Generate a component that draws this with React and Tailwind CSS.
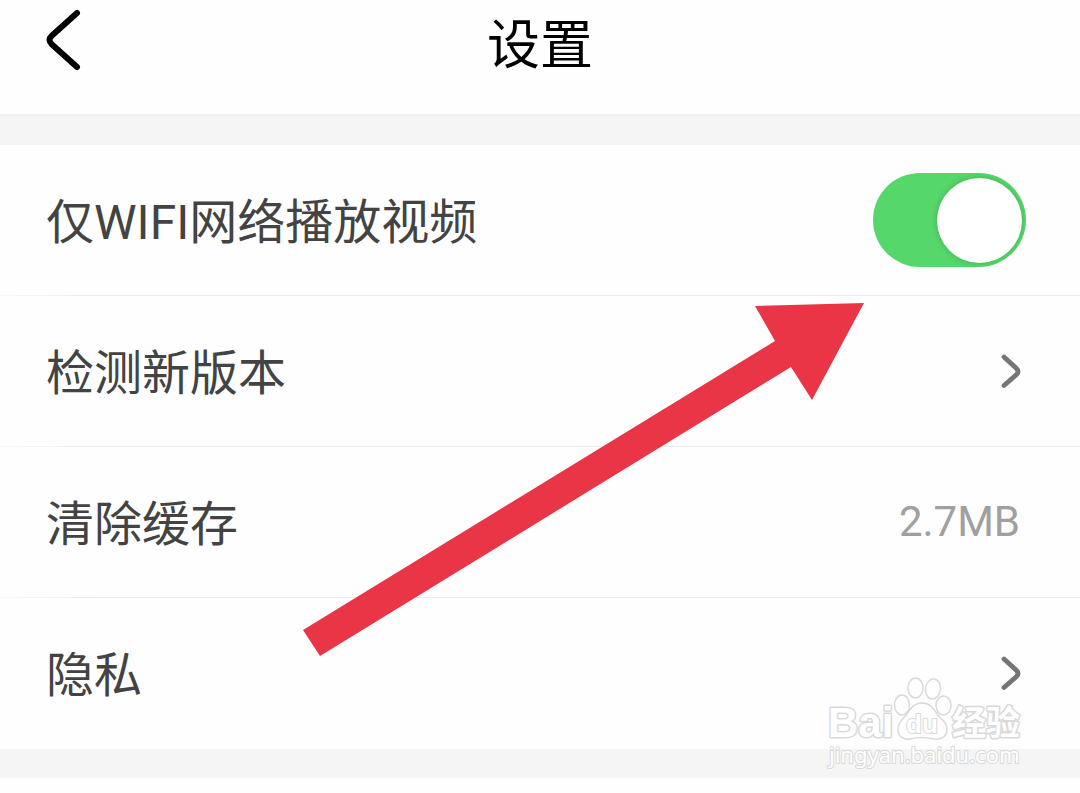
import React, { useState } from 'react'

function Row({ children, last }) {
  return (
    <li className="bg-[#fefefe]">
      <div className="h-[150px] pl-[46px] pr-[54px] flex items-center justify-between text-5xl text-[#434343]">
        {children}
      </div>
      <div className={last ? 'h-px' : 'h-px bg-linear-to-r from-[#f8f8f8] to-[#ebebeb] to-10%'} />
    </li>
  )
}

function Chevron() {
  return (
    <svg className="w-6 h-10 mr-[5px]" viewBox="0 0 24 40" fill="none" stroke="#757575" strokeWidth="4.8" strokeLinecap="round" strokeLinejoin="round">
      <path d="M7 6L19.5 17.5Q22.5 20.500 19.5 23.5L7 34.5" />
    </svg>
  )
}

function Toggle() {
  const [on, setOn] = useState(true)
  return (
    <input
      id="wifi"
      type="checkbox"
      role="switch"
      checked={on}
      onChange={e => setOn(e.target.checked)}
      className="appearance-none w-[153px] h-[94px] p-1 rounded-full flex items-center bg-[#ddd] checked:bg-[#55d76a] checked:justify-end before:block before:size-[85px] before:rounded-full before:bg-white before:shadow-[0_0_6px_rgba(0,0,0,0.2)]"
    />
  )
}

function Arrow() {
  return (
    <svg className="absolute left-[303px] top-[303px] w-[562px] h-[354px] pointer-events-none" viewBox="0 0 562 354" fill="#ea3547">
      <path d="M561 0L452 3L472 38L0 327L17 353L488 64L509 97Z" />
    </svg>
  )
}

function Watermark() {
  return (
    <svg className="absolute left-[820px] top-[670px] w-[210px] h-[110px] pointer-events-none" viewBox="0 0 210 110" fill="#fff" stroke="#d9d9d9" strokeWidth="1.5" strokeLinejoin="round">
      <text x="8" y="67" fontSize="42" fontWeight="700" strokeWidth="3" paintOrder="stroke" fontFamily="'Liberation Sans', sans-serif">Bai</text>
      <ellipse cx="82" cy="35" rx="7.5" ry="10" />
      <ellipse cx="95.5" cy="18" rx="7.5" ry="10" />
      <ellipse cx="113" cy="19" rx="7.5" ry="10" transform="rotate(8 113 19)" />
      <ellipse cx="123.5" cy="35.5" rx="7.5" ry="9.5" />
      <path d="M102 33C94 33 90 39 87 44C83 49 78 52 78 60C78 66 83 70 90 69C98 67 106 67 114 69C122 70 127 66 127 59C127 52 121 49 117 44C113 38 110 33 102 33Z" />
      <text x="86" y="63" fontSize="26" fontWeight="700" strokeWidth="2" paintOrder="stroke" fontFamily="'Liberation Sans', sans-serif">du</text>
      <text x="132" y="65" fontSize="34" fontWeight="700" strokeWidth="3" paintOrder="stroke" fontFamily="'Noto Sans CJK SC', sans-serif">经验</text>
      <text x="9" y="93" fontSize="22" strokeWidth="2" paintOrder="stroke" fontFamily="'Noto Sans', sans-serif">jingyan.baidu.com</text>
    </svg>
  )
}

export default function App() {
  return (
    <div className="relative bg-[#fefefe] overflow-hidden font-[Roboto,'Noto_Sans_CJK_SC',sans-serif]">
      <header className="h-[114px] pb-6 px-10 grid grid-cols-[1fr_auto_1fr] items-center">
        <button aria-label="返回" className="justify-self-start -mt-2.5">
          <svg className="w-11 h-16" viewBox="0 0 44 64" fill="none" stroke="#000" strokeWidth="6" strokeLinecap="round" strokeLinejoin="round">
            <path d="M37 5L12 27.5Q7 32 12 36.5L37 59" />
          </svg>
        </button>
        <h1 className="pt-0.5 text-[53px] leading-[88px] text-black">设置</h1>
      </header>
      <div className="h-[31px] bg-[#f5f5f5] border-t-2 border-[#efefef]" />
      <ul>
        <Row>
          <label htmlFor="wifi" className="pt-1.5">仅WIFI网络播放视频</label>
          <Toggle />
        </Row>
        <Row>
          <span className="pt-1.5">检测新版本</span>
          <Chevron />
        </Row>
        <Row>
          <span className="pt-1.5">清除缓存</span>
          <span className="text-[42px] text-[#a0a0a0] mr-1.5">2.7MB</span>
        </Row>
        <Row last>
          <span className="pt-1.5">隐私</span>
          <Chevron />
        </Row>
      </ul>
      <div className="h-[29px] bg-[#f5f5f5]" />
      <div className="h-4" />
      <Arrow />
      <Watermark />
    </div>
  )
}
